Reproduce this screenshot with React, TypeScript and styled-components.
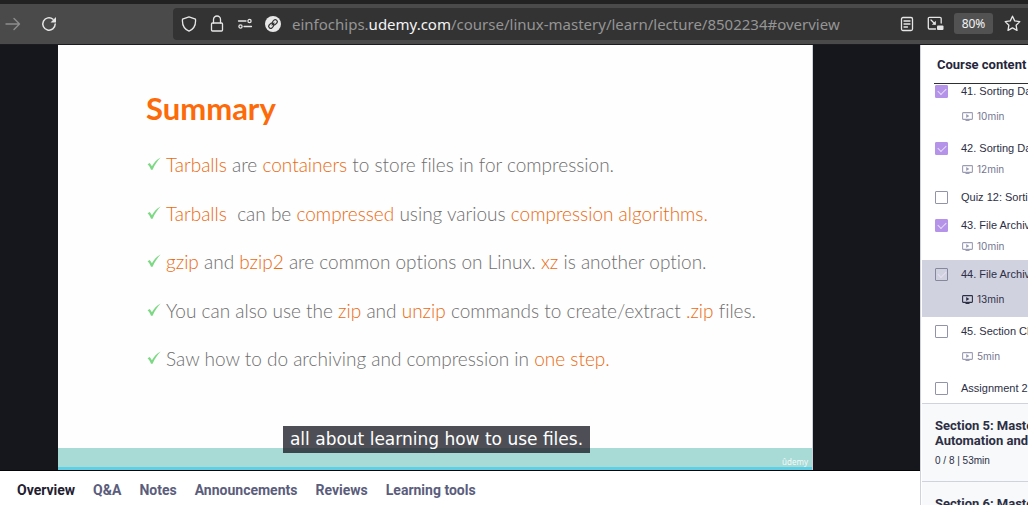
import React from "react";
import styled, { createGlobalStyle, css } from "styled-components";

const GlobalStyle = createGlobalStyle`
  * { box-sizing: border-box; }
  html, body, #root { height: 100%; }
  body { margin: 0; overflow: hidden; background: #fff; font-family: Roboto, "Liberation Sans", sans-serif; }
  button, input { font-family: inherit; margin: 0; }
`;

const Page = styled.div`
  display: flex;
  flex-direction: column;
  height: 100%;
  overflow: hidden;
`;

/* Browser toolbar */
const Toolbar = styled.header`
  display: flex;
  align-items: center;
  flex: none;
  height: 45px;
  padding: 3px 0 4px;
  background: #4a4a4a;
  border-top: 4px solid #222;
  border-bottom: 1px solid #1c1c1e;
`;
const NavButtons = styled.div`
  display: flex;
  align-items: center;
  flex: none;
  gap: 18px;
  width: 173px;
  padding-left: 4px;
`;
const IconButton = styled.button<{ $dim?: boolean }>`
  display: flex;
  align-items: center;
  justify-content: center;
  flex: none;
  width: 18px;
  height: 18px;
  padding: 0;
  border: 0;
  background: none;
  color: ${(p) => (p.$dim ? "#8d8d8d" : "#e6e6e6")};
  svg { flex: none; }
`;
const AddressBar = styled.div`
  display: flex;
  align-items: center;
  flex: 1;
  min-width: 0;
  height: 32px;
  padding: 0 7px 0 7px;
  gap: 10px;
  border-radius: 4px 0 0 4px;
  background: #333;
`;
const Address = styled.div`
  flex: 1;
  min-width: 0;
  overflow: hidden;
  white-space: nowrap;
  font: 15px/24px "Noto Sans", sans-serif;
  color: #959595;
  b { font-weight: 400; color: #f4f4f4; }
`;
const ZoomLevel = styled.button`
  flex: none;
  width: 39px;
  height: 21px;
  padding: 0;
  border: 0;
  border-radius: 3px;
  background: #525252;
  color: #f4f4f4;
  font: 12px/21px "Noto Sans", sans-serif;
`;

/* Course page */
const Course = styled.div`
  display: flex;
  flex: 1;
  min-height: 0;
`;
const Main = styled.main`
  display: flex;
  flex-direction: column;
  flex: 1;
  min-width: 0;
`;
const Stage = styled.section`
  flex: none;
  padding: 0 107px 0 58px;
  background: #16171d;
  border-bottom: 1px solid #050507;
`;
const Slide = styled.article`
  position: relative;
  display: flex;
  flex-direction: column;
  height: 425px;
  padding-top: 44px;
  background: #fefefe;
  border-right: 1px solid #cdd0da;
  font-family: Lato, sans-serif;
`;
const SlideTitle = styled.h1`
  margin: 0;
  padding-left: 88px;
  font-size: 31px;
  line-height: 38px;
  font-weight: 700;
  color: #fd6a09;
`;
const Points = styled.ul`
  display: flex;
  flex-direction: column;
  justify-content: space-between;
  height: 218px;
  margin: 26px 0 0;
  padding: 0 0 0 89px;
  list-style: none;
`;
const Point = styled.li`
  display: flex;
  gap: 5px;
  white-space: pre;
  font-size: 19px;
  line-height: 24px;
  font-weight: 300;
  font-variant-ligatures: none;
  color: #6e6e6e;
  em { font-style: normal; color: #ea6a10; }
  svg { flex: none; margin-top: 4px; }
`;
const SlideFooter = styled.div`
  height: 22px;
  margin-top: auto;
  padding-right: 4px;
  background: #a8dad6;
  border-bottom: 3px solid #5fcfe6;
  text-align: right;
  font: 8px/28px "Noto Sans", sans-serif;
  color: #f2fbfa;
`;
const CaptionLayer = styled.div`
  position: absolute;
  right: 0;
  bottom: 17px;
  left: 0;
  display: flex;
  justify-content: center;
  padding-left: 3px;
`;
const Caption = styled.p`
  margin: 0;
  padding: 0 7px;
  background: rgba(28, 29, 38, 0.78);
  color: #fff;
  white-space: nowrap;
  font: 17px/27px "DejaVu Sans", sans-serif;
`;
const Tabs = styled.nav`
  display: flex;
  gap: 18px;
  padding: 9px 17px;
`;
const Tab = styled.button<{ $active?: boolean }>`
  padding: 0;
  border: 0;
  background: none;
  white-space: nowrap;
  font-size: 14px;
  line-height: 20px;
  font-weight: 700;
  color: ${(p) => (p.$active ? "#1f2030" : "#5b5d7c")};
`;

/* Curriculum */
const Sidebar = styled.aside`
  display: flex;
  flex-direction: column;
  flex: none;
  width: 108px;
  overflow: hidden;
  border-left: 1px solid #d1d2e0;
  white-space: nowrap;
  color: #2d2f45;
`;
const SidebarTitle = styled.h2`
  flex: none;
  height: 39px;
  margin: 0 0 0 13px;
  padding-left: 3px;
  border-bottom: 1px solid #2d2f31;
  font-size: 13px;
  line-height: 40px;
  font-weight: 700;
  color: #25263b;
`;
const Scroller = styled.div`
  flex: 1;
  min-height: 0;
  overflow: hidden;
`;
const Lectures = styled.ul`
  margin: -7px 0 0;
  padding: 0 0 1px;
  list-style: none;
`;
const Lecture = styled.li<{ $roomy?: boolean; $current?: boolean }>`
  display: flex;
  flex-direction: column;
  gap: ${(p) => (p.$roomy ? 11 : 7)}px;
  margin-left: 1px;
  padding: 7px 0 ${(p) => (p.$roomy ? 11 : 7)}px 13px;
  ${(p) => p.$current && css`background: #d1d2e0;`}
`;
const LectureLabel = styled.label`
  display: flex;
  align-items: center;
  gap: 13px;
  height: 14px;
  font: 11px/14px "Liberation Sans", sans-serif;
`;
const Tick = styled.input<{ $faint?: boolean }>`
  appearance: none;
  display: grid;
  place-items: center;
  flex: none;
  width: 13px;
  height: 13px;
  border: 1px solid #9193a8;
  border-radius: 1px;
  background: transparent;
  &:checked { background: #b593e8; border-color: #b593e8; }
  ${(p) => p.$faint && css`&:checked { background: transparent; border-color: #85879b; }`}
  &:checked::after {
    content: "";
    width: 7px;
    height: 4px;
    margin-bottom: 2px;
    border: solid #e6e0f4;
    border-width: 0 0 1px 1px;
    transform: rotate(-45deg);
  }
`;
const Duration = styled.div<{ $current?: boolean }>`
  display: flex;
  align-items: center;
  gap: 4px;
  padding-left: 27px;
  font: 10px/14px Inter, sans-serif;
  color: ${(p) => (p.$current ? "#2d2f45" : "#74768f")};
  svg { color: ${(p) => (p.$current ? "#2d2f45" : "#9b9db4")}; }
`;
const Section = styled.section`
  height: 78px;
  margin-left: 1px;
  padding: 14px 0 0 13px;
  background: #f7f9fa;
  border-top: 1px solid #d1d2e0;
`;
const SectionTitle = styled.h3`
  margin: 0;
  font-size: 13px;
  line-height: 15px;
  font-weight: 700;
`;
const SectionMeta = styled.p`
  margin: 6px 0 0;
  font: 10px/14px "Liberation Sans", sans-serif;
`;

const stroke = { fill: "none", stroke: "currentColor", strokeLinecap: "round", strokeLinejoin: "round" } as const;

const ForwardIcon = () => (
  <svg width="16" height="14" viewBox="0 0 16 14" {...stroke} strokeWidth="1.4"><path d="M1 7h13.500M9 1.500 14.500 7 9 12.500" /></svg>
);
const ReloadIcon = () => (
  <svg width="16" height="16" viewBox="0 0 16 16" {...stroke} strokeWidth="1.5">
    <path d="M12 3.200A6.200 6.200 0 1 0 14.200 8" />
    <path d="M15 1v5.500H9.500z" fill="currentColor" stroke="none" />
  </svg>
);
const ShieldIcon = () => (
  <svg width="16" height="16" viewBox="0 0 16 16" {...stroke} strokeWidth="1.300"><path d="M8 .9 14.500 3.200C15 8.500 12.800 13 8 15.200 3.200 13 1 8.500 1.500 3.200z" /></svg>
);
const LockIcon = () => (
  <svg width="14" height="17" viewBox="0 0 14 17" {...stroke} strokeWidth="1.300"><rect x="1.500" y="8" width="11" height="8" rx="1" /><path d="M3.500 8V4.500a3.500 3.500 0 0 1 7 0V8" /></svg>
);
const PermissionsIcon = () => (
  <svg width="16" height="12" viewBox="0 0 16 12" {...stroke} strokeWidth="1.300"><circle cx="12.500" cy="3" r="1.600" /><circle cx="3.500" cy="8.500" r="1.600" /><path d="M1.500 3h7.500M7 8.500h7.500" /></svg>
);
const LinkIcon = () => (
  <svg width="16" height="16" viewBox="0 0 16 16">
    <circle cx="8" cy="8" r="8" fill="#e8e8e8" />
    <g transform="rotate(-45 8 8)" fill="none" stroke="#333" strokeWidth="1.200"><rect x="2.800" y="6" width="5.200" height="4" rx="1.800" /><rect x="8" y="6" width="5.200" height="4" rx="1.800" /><path d="M6 8h4" /></g>
  </svg>
);
const ReaderIcon = () => (
  <svg width="14" height="16" viewBox="0 0 14 16" {...stroke} strokeWidth="1.300"><rect x="1.500" y="1.500" width="11" height="13" rx="1.500" /><path d="M4 5h6M4 8h6M4 11h3.500" /></svg>
);
const PopOutIcon = () => (
  <svg width="17" height="15" viewBox="0 0 17 15" {...stroke} strokeWidth="1.300"><path d="M8.500 13H2.500A1.200 1.200 0 0 1 1.300 11.800V2.500A1.200 1.200 0 0 1 2.500 1.300h10.500a1.200 1.200 0 0 1 1.200 1.200V7M4 4l4 4" /><path d="M8.800 4.800v4h-4z" fill="currentColor" stroke="none" /><rect x="10" y="9.500" width="6.500" height="4.500" rx="1" fill="currentColor" stroke="none" /></svg>
);
const StarIcon = () => (
  <svg width="17" height="17" viewBox="0 0 17 17" {...stroke} strokeWidth="1.300"><path d="m8.500 1.200 2.200 4.700 5.100.7-3.700 3.600.9 5.200-4.500-2.500L4 15.400l.9-5.200L1.200 6.600l5.100-.7z" /></svg>
);
const CheckMark = () => (
  <svg width="14" height="14" viewBox="0 0 14 14"><path d="M.6 7.300 2.800 6 4.900 9.200C7 5.600 9.500 2.500 13.600.4 10.200 4 7.600 7.800 5.600 12.800H4C3.200 10.600 2.200 8.800.6 7.300z" fill="#7bd983" /></svg>
);
const VideoIcon = () => (
  <svg width="11" height="9" viewBox="0 0 11 9"><rect x=".6" y=".6" width="9.800" height="6.800" rx=".6" fill="none" stroke="currentColor" strokeWidth="1.100" /><path d="M4.200 2v4L7.400 4zM3.500 8h4v1h-4z" fill="currentColor" /></svg>
);

const tabs = ["Overview", "Q&A", "Notes", "Announcements", "Reviews", "Learning tools"];

type LectureItem = { title: string; time?: string; done?: boolean; roomy?: boolean; current?: boolean };
const lectures: LectureItem[] = [
  { title: "41. Sorting Data", time: "10min", done: true, roomy: true },
  { title: "42. Sorting Data", time: "12min", done: true },
  { title: "Quiz 12: Sorting" },
  { title: "43. File Archiving", time: "10min", done: true },
  { title: "44. File Archiving", time: "13min", done: true, roomy: true, current: true },
  { title: "45. Section Ch", time: "5min", roomy: true },
  { title: "Assignment 2" },
];

export default function App() {
  return (
    <Page>
      <GlobalStyle />
      <Toolbar>
        <NavButtons>
          <IconButton $dim aria-label="Forward"><ForwardIcon /></IconButton>
          <IconButton aria-label="Reload"><ReloadIcon /></IconButton>
        </NavButtons>
        <AddressBar>
          <IconButton aria-label="Tracking protection"><ShieldIcon /></IconButton>
          <IconButton aria-label="Connection security"><LockIcon /></IconButton>
          <IconButton aria-label="Permissions"><PermissionsIcon /></IconButton>
          <IconButton aria-label="Copy link"><LinkIcon /></IconButton>
          <Address>einfochips.<b>udemy.com</b>/course/linux-mastery/learn/lecture/8502234#overview</Address>
          <IconButton aria-label="Reader view"><ReaderIcon /></IconButton>
          <IconButton aria-label="Picture in picture"><PopOutIcon /></IconButton>
          <ZoomLevel>80%</ZoomLevel>
          <IconButton aria-label="Bookmark"><StarIcon /></IconButton>
        </AddressBar>
      </Toolbar>
      <Course>
        <Main>
          <Stage>
            <Slide>
              <SlideTitle>Summary</SlideTitle>
              <Points>
                <Point><CheckMark /><span><em>Tarballs</em> are <em>containers</em> to store files in for compression.</span></Point>
                <Point><CheckMark /><span><em>Tarballs</em>{"  "}can be <em>compressed</em> using various <em>compression algorithms.</em></span></Point>
                <Point><CheckMark /><span><em>gzip</em> and <em>bzip2</em> are common options on Linux. <em>xz</em> is another option.</span></Point>
                <Point><CheckMark /><span>You can also use the <em>zip</em> and <em>unzip</em> commands to create/extract <em>.zip</em> files.</span></Point>
                <Point><CheckMark /><span>Saw how to do archiving and compression in <em>one step.</em></span></Point>
              </Points>
              <SlideFooter>ûdemy</SlideFooter>
              <CaptionLayer><Caption>all about learning how to use files.</Caption></CaptionLayer>
            </Slide>
          </Stage>
          <Tabs>
            {tabs.map((name, i) => <Tab key={name} $active={i === 0}>{name}</Tab>)}
          </Tabs>
        </Main>
        <Sidebar>
          <SidebarTitle>Course content</SidebarTitle>
          <Scroller>
            <Lectures>
              {lectures.map((l) => (
                <Lecture key={l.title} $roomy={l.roomy} $current={l.current}>
                  <LectureLabel><Tick type="checkbox" defaultChecked={l.done} $faint={l.current} />{l.title}</LectureLabel>
                  {l.time && <Duration $current={l.current}><VideoIcon />{l.time}</Duration>}
                </Lecture>
              ))}
            </Lectures>
            <Section>
              <SectionTitle>Section 5: Mastering<br />Automation and</SectionTitle>
              <SectionMeta>0 / 8 | 53min</SectionMeta>
            </Section>
            <Section>
              <SectionTitle>Section 6: Mastering</SectionTitle>
            </Section>
          </Scroller>
        </Sidebar>
      </Course>
    </Page>
  );
}
